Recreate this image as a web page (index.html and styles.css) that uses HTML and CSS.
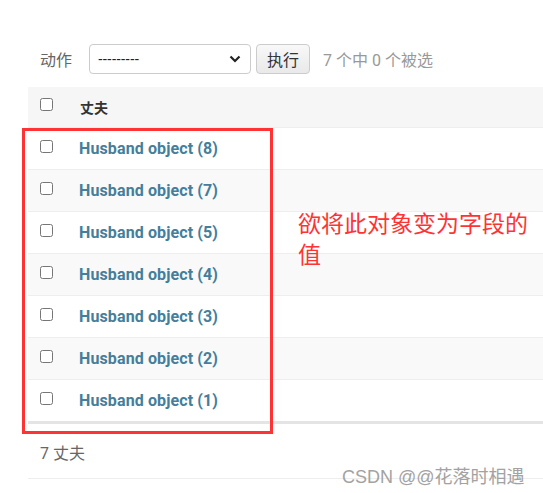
FILE: index.html
```html
<!DOCTYPE html>
<html>
<head>
<meta charset="utf-8">
<link rel="stylesheet" href="styles.css">
</head>
<body>
<div class="page">
  <div class="actions">
    <span class="label">动作</span>
    <div class="select"><span class="sel-text">---------</span>
      <svg class="chev" width="12" height="8" viewBox="0 0 12 8"><path d="M1.5 1.5 L6 6 L10.5 1.5" fill="none" stroke="#222" stroke-width="2.2"/></svg>
    </div>
    <button class="go">执行</button>
    <span class="counter">7 个中 0 个被选</span>
  </div>
  <div class="table">
    <div class="row head"><span class="cb"></span><span class="th">丈夫</span></div>
    <div class="row"><span class="cb"></span><a class="lnk">Husband object (8)</a></div>
    <div class="row alt"><span class="cb"></span><a class="lnk">Husband object (7)</a></div>
    <div class="row"><span class="cb"></span><a class="lnk">Husband object (5)</a></div>
    <div class="row alt"><span class="cb"></span><a class="lnk">Husband object (4)</a></div>
    <div class="row"><span class="cb"></span><a class="lnk">Husband object (3)</a></div>
    <div class="row alt"><span class="cb"></span><a class="lnk">Husband object (2)</a></div>
    <div class="row last"><span class="cb"></span><a class="lnk">Husband object (1)</a></div>
  </div>
  <div class="footer">7 丈夫</div>
  <div class="redbox"></div>
  <div class="note">欲将此对象变为字段的<br>值</div>
  <div class="wm">CSDN @@花落时相遇</div>
</div>
</body>
</html>
```
FILE: styles.css
```css
html, body { margin: 0; padding: 0; background: #fff; }
body { font-family: Roboto, "Noto Sans CJK SC", sans-serif; }
.page { position: relative; width: 543px; height: 493px; overflow: hidden; padding-left: 28px; box-sizing: border-box; }
.actions { display: flex; align-items: center; height: 30px; margin-top: 44px; padding-left: 12px; font-size: 16px; }
.label { color: #666; width: 49px; }
.select { width: 162px; border: 1px solid #ccc; border-radius: 4px; display: flex; align-items: center; justify-content: space-between; padding: 0 9px 0 8px; box-sizing: border-box; height: 30px; }
.sel-text { font-size: 14px; color: #222; font-family: "Liberation Sans", sans-serif; letter-spacing: -0.1px; }
.go { margin-left: 5px; height: 30px; width: 54px; border: 1px solid #ccc; border-radius: 4px; background: linear-gradient(#f8f8f8, #e9e9e9); font-size: 16px; color: #333; font-family: "Noto Sans CJK SC", sans-serif; padding: 0; }
.counter { margin-left: 13px; color: #999; font-size: 16px; }
.table { margin-top: 13px; }
.row { display: flex; align-items: center; height: 41px; border-bottom: 1px solid #eee; padding-left: 12px; }
.row.head { background: #f6f6f6; border-bottom: 1px solid #eee; height: 40px; }
.row.alt { background: #f9f9f9; }
.row.last { border-bottom: 3px solid #e4e4e4; }
.cb { width: 11px; height: 11px; border: 1.5px solid #767676; border-radius: 2.5px; background: #fff; flex: none; margin-top: -5px; }
.th { margin-left: 27px; font-weight: bold; font-size: 14px; color: #333; }
.lnk { margin-left: 26px; font-weight: bold; font-size: 16px; letter-spacing: 0.12px; color: #447e9b; }
.footer { height: 55px; border-bottom: 1px solid #eee; display: flex; align-items: center; padding-left: 12px; color: #666; font-size: 16px; padding-top: 2px; box-sizing: border-box; }
.redbox { position: absolute; left: 22px; top: 128px; width: 245px; height: 300px; border: 3px solid #f33; }
.note { position: absolute; left: 298px; top: 207px; color: #f33; font-size: 23px; line-height: 31px; font-family: "Noto Sans CJK SC", sans-serif; }
.wm { position: absolute; left: 342px; top: 462px; color: #999; font-size: 18px; font-family: "Liberation Sans", "Noto Sans CJK SC", sans-serif; opacity: 0.9; }
```
